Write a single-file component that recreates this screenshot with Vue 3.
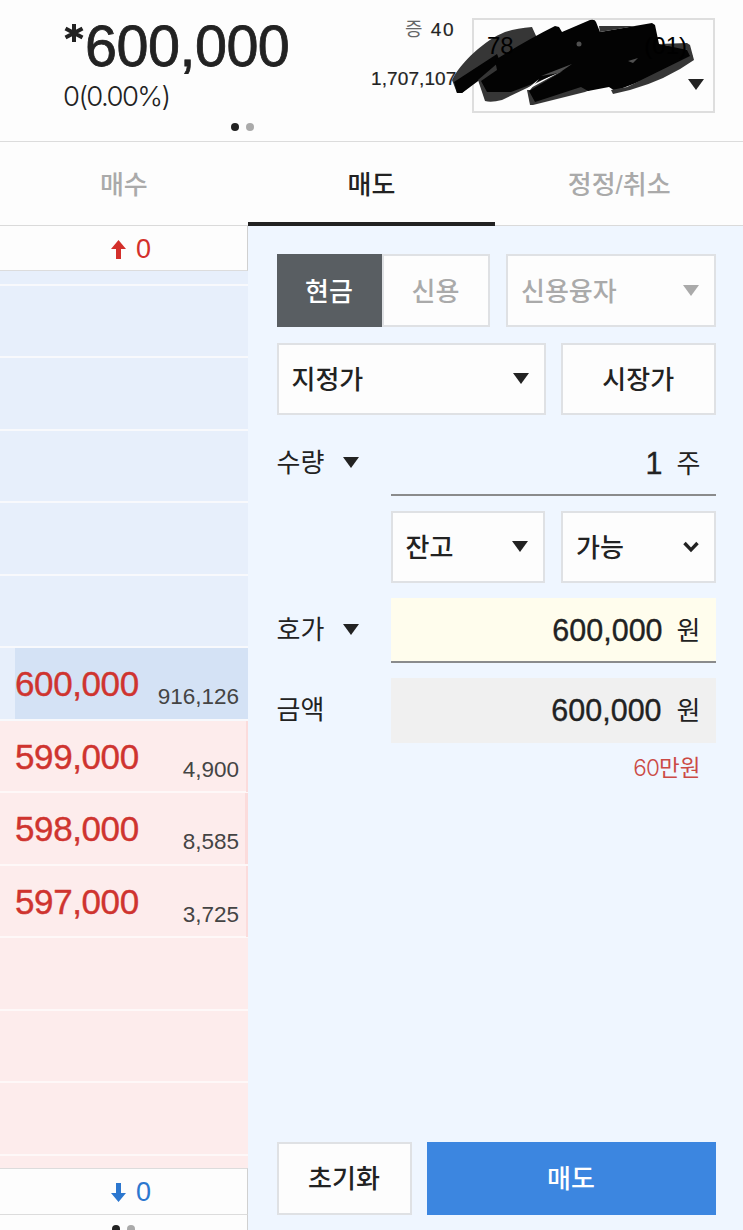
<script setup>
import { ref } from 'vue';

const tabs = ['매수', '매도', '정정/취소'];
const activeTab = ref('매도');

// price ladder, the first row is cut off by the scroll position
const rows = [
    { side: 'ask', cut: true },
    { side: 'ask' },
    { side: 'ask' },
    { side: 'ask' },
    { side: 'ask' },
    { side: 'ask' },
    { side: 'ask', price: '600,000', volume: '916,126', current: true },
    { side: 'bid', price: '599,000', volume: '4,900', bar: 2 },
    { side: 'bid', price: '598,000', volume: '8,585', bar: 3 },
    { side: 'bid', price: '597,000', volume: '3,725', bar: 2 },
    { side: 'bid' },
    { side: 'bid' },
    { side: 'bid' },
    { side: 'bid' }
];
</script>

<template>
    <div class="screen">
        <header class="header">
            <div class="quote">
                <div class="quote-price">
                    <svg class="star" viewBox="0 0 20 20"><path d="M10 1V19M1.5 5.5L18.5 14.5M18.5 5.5L1.5 14.5" /></svg>
                    <span>600,000</span>
                </div>
                <div class="quote-change">0(0.00%)</div>
                <div class="dots"><i class="on"></i><i></i></div>
            </div>
            <div class="stats">
                <div class="margin"><span>증</span> 40</div>
                <div class="total">1,707,107</div>
            </div>
            <div class="account">
                <svg class="marker" viewBox="0 0 250 100">
                    <path class="soft" d="M1 70C10 52 34 30 54 22Q66 18 81 17L86 28L44 54L11 83H6Z" />
                    <path d="M3 72L46 44L50 54L11 83H6Z" />
                    <path class="soft" d="M27 70L48 52L120 40L130 50L76 78L51 90Q40 93 34 91Z" />
                    <path class="soft" d="M76 80L120 56L180 50L190 60L134 82L82 95H79Z" />
                    <path d="M44 50Q76 30 104 16L108 17L111 22L139 10Q144 9 145 12L149 22L201 13L204 15L208 34L232 38L239 41L242 47Q210 64 164 81L158 77L137 81L130 77L84 92L78 81L112 61L76 76L60 82L36 82L30 71L46 60Z" />
                    <path class="soft" d="M148 16L185 16L149 22Z" />
                    <path class="soft" d="M208 34L236 33L239 35L243 50Q215 70 179 80L162 84L160 80L176 77L239 46L236 40Z" />
                    <path class="gap" d="M75 80L88 69L79 80Z" />
                    <path class="glint" d="M90 66L121 54L108 63Z" />
                    <circle class="glint" cx="128" cy="34" r="2.5" />
                    <path class="glint" d="M177 51L187 48L182 53Z" />
                </svg>
                <div class="account-no"><span>78</span><span>(01)</span></div>
                <svg class="caret" viewBox="0 0 16 11"><path d="M0 0H16L8 11Z" /></svg>
            </div>
        </header>

        <nav class="tabs">
            <div v-for="tab in tabs" :key="tab" :class="['tab', { active: tab === activeTab }]">{{ tab }}</div>
        </nav>

        <main class="body">
            <section class="ladder">
                <div class="limit up">
                    <svg viewBox="0 0 15 19"><path d="M7.5 0L15 9H10V19H5V9H0Z" /></svg>
                    <span>0</span>
                </div>
                <div class="rows">
                    <div v-for="(row, i) in rows" :key="i"
                         :class="['row', row.side, { cut: row.cut, current: row.current }]">
                        <span class="price">{{ row.price }}</span>
                        <span class="volume">{{ row.volume }}</span>
                        <i v-if="row.bar" class="bar" :style="{ width: row.bar + 'px' }"></i>
                    </div>
                </div>
                <div class="limit down">
                    <svg viewBox="0 0 15 19"><path d="M7.5 19L15 10H10V0H5V10H0Z" /></svg>
                    <span>0</span>
                </div>
                <div class="pager"><i class="on"></i><i></i></div>
            </section>

            <section class="order">
                <div class="line">
                    <div class="toggle">
                        <div class="toggle-item selected">현금</div>
                        <div class="toggle-item">신용</div>
                    </div>
                    <div class="box select muted loan">
                        <span>신용융자</span>
                        <svg class="caret" viewBox="0 0 16 11"><path d="M0 0H16L8 11Z" /></svg>
                    </div>
                </div>
                <div class="line">
                    <div class="box select wide">
                        <span>지정가</span>
                        <svg class="caret" viewBox="0 0 16 11"><path d="M0 0H16L8 11Z" /></svg>
                    </div>
                    <div class="box half center">시장가</div>
                </div>
                <div class="field">
                    <div class="label">수량 <svg class="caret" viewBox="0 0 16 11"><path d="M0 0H16L8 11Z" /></svg></div>
                    <div class="input"><span class="num">1</span><span class="unit">주</span></div>
                </div>
                <div class="line right">
                    <div class="box select half">
                        <span>잔고</span>
                        <svg class="caret" viewBox="0 0 16 11"><path d="M0 0H16L8 11Z" /></svg>
                    </div>
                    <div class="box select half">
                        <span>가능</span>
                        <svg class="chevron" viewBox="0 0 16 12"><path d="M1.5 2L8 8.8L14.5 2" /></svg>
                    </div>
                </div>
                <div class="field">
                    <div class="label">호가 <svg class="caret" viewBox="0 0 16 11"><path d="M0 0H16L8 11Z" /></svg></div>
                    <div class="input yellow"><span class="num">600,000</span><span class="unit">원</span></div>
                </div>
                <div class="field">
                    <div class="label">금액</div>
                    <div class="input grey"><span class="num">600,000</span><span class="unit">원</span></div>
                </div>
                <div class="hint"><span>60</span>만원</div>
                <div class="actions">
                    <div class="box reset">초기화</div>
                    <div class="sell">매도</div>
                </div>
            </section>
        </main>
    </div>
</template>

<style>
body {
    margin: 0;
    overflow: hidden;
}
</style>

<style scoped>
.screen {
    width: 743px;
    height: 1230px;
    display: flex;
    flex-direction: column;
    overflow: hidden;
    background: #fdfdfd;
    color: #222;
    font-family: "Liberation Sans", "Noto Sans CJK KR", sans-serif;
    font-size: 26px;
}

.screen * {
    box-sizing: border-box;
}

svg {
    display: block;
    flex: none;
}

.header {
    display: flex;
    height: 142px;
    flex: none;
    border-bottom: 1.5px solid #dcdcdc;
}

.quote {
    width: 345px;
    padding: 15px 0 0 63px;
}

.quote-price {
    display: flex;
    height: 62px;
    line-height: 62px;
    font-size: 57.5px;
    letter-spacing: -0.5px;
    white-space: nowrap;
    -webkit-text-stroke: 0.8px #222;
}

.star {
    width: 20px;
    height: 20px;
    margin: 8px 1px 0 1px;
    fill: none;
    stroke: #222;
    stroke-width: 4;
}

.quote-change {
    height: 38px;
    line-height: 38px;
    font-family: Inter, sans-serif;
    font-size: 27.5px;
    font-weight: 300;
    letter-spacing: -1.6px;
}

.dots,
.pager {
    display: flex;
    gap: 7px;
}

.dots {
    padding: 8px 0 0 168px;
}

.dots i,
.pager i {
    width: 8px;
    height: 8px;
    border-radius: 50%;
    background: #aaa;
}

.dots .on,
.pager .on {
    background: #222;
}

.stats {
    width: 127px;
    padding-top: 15px;
    font-size: 19px;
    -webkit-text-stroke: 0.2px #222;
}

.margin {
    width: 110px;
    height: 30px;
    line-height: 30px;
    text-align: right;
    letter-spacing: 1.5px;
}

.margin span {
    color: #666;
    -webkit-text-stroke: 0;
}

.total {
    height: 30px;
    margin-top: 19px;
    padding-left: 26px;
    line-height: 30px;
    letter-spacing: 0.1px;
}

.account {
    position: relative;
    width: 243px;
    height: 95px;
    margin-top: 18px;
    border: 2px solid #dedede;
}

.account-no {
    position: relative;
    display: flex;
    justify-content: space-between;
    padding: 12px 26px 0 13px;
    line-height: 28px;
    font-size: 24px;
    color: #000;
}

.account .caret {
    position: absolute;
    right: 9px;
    top: 59px;
}

/* hand-drawn marker over the account number */
.marker {
    position: absolute;
    left: -23px;
    top: -10px;
    width: 250px;
    height: 100px;
    fill: #030303;
    filter: blur(0.5px);
}

.marker .soft {
    fill: #363636;
}

.marker .glint {
    fill: #505050;
}

.marker .gap {
    fill: #fdfdfd;
}

.caret {
    width: 16px;
    height: 11px;
    fill: #222;
}

.tabs {
    display: flex;
    height: 84px;
    flex: none;
    border-bottom: 1px solid #dadada;
    font-weight: 500;
}

.tab {
    width: 248px;
    height: 84px;
    line-height: 86px;
    text-align: center;
    color: #aaa;
}

.tab.active {
    color: #222;
    border-bottom: 4px solid #222;
}

.body {
    display: flex;
    flex: 1;
    min-height: 0;
}

.ladder {
    width: 248px;
    display: flex;
    flex-direction: column;
    background: #fdfdfd;
}

.limit {
    display: flex;
    align-items: center;
    height: 45px;
    flex: none;
    padding-left: 111px;
    gap: 10px;
    border-right: 1px solid #d0d0d0;
    border-bottom: 1px solid #dcdcdc;
    font-size: 27px;
}

.limit svg {
    width: 15px;
    height: 19px;
    fill: currentColor;
}

.up {
    padding-top: 2px;
    color: #d3302b;
}

.down {
    height: 47px;
    padding-top: 1px;
    border-top: 1px solid #dcdcdc;
    color: #2c77cf;
}

.rows {
    height: 897px;
    flex: none;
    overflow: hidden;
}

.row {
    position: relative;
    display: flex;
    justify-content: space-between;
    height: 72.5px;
    padding: 0 9px 0 15px;
    border-bottom: 2px solid #f8f9fc;
}

.row.cut {
    height: 14.5px;
}

.ask {
    background: #e7effb;
}

.bid {
    background: #fdecec;
    border-color: #fef8f8;
}

.current {
    background: linear-gradient(to right, #e7effb 15px, #d4e2f5 15px);
}

.price {
    line-height: 72px;
    font-size: 35px;
    letter-spacing: -0.4px;
    color: #cf342f;
    -webkit-text-stroke: 0.4px #cf342f;
}

.volume {
    line-height: 97px;
    font-size: 22.5px;
    color: #444;
}

.bar {
    position: absolute;
    right: 0;
    top: 0;
    height: 71px;
    background: #fbdcdc;
}

.pager {
    padding: 10px 0 0 112px;
    flex: 1;
    border-right: 1px solid #d0d0d0;
}

.order {
    flex: 1;
    display: flex;
    flex-direction: column;
    padding: 28px 27.5px 15.5px 28.5px;
    background: #eff6ff;
}

.line {
    display: flex;
    justify-content: space-between;
    height: 72.5px;
    margin-bottom: 16px;
}

.line.right {
    padding-left: 114px;
    margin: -0.5px 0 15px;
}

.box {
    height: 72.5px;
    line-height: 70px;
    border: 2px solid #dfe1e4;
    background: #fdfdfd;
    font-weight: 500;
}

.toggle {
    display: flex;
    width: 213px;
    line-height: 72px;
    text-align: center;
    font-weight: 500;
}

.toggle-item {
    width: 108px;
    border: 2px solid #dfe1e4;
    background: #fdfdfd;
    color: #aaa;
}

.toggle-item.selected {
    width: 105px;
    border-color: #595e62;
    background: #595e62;
    color: #fff;
}

.select {
    display: flex;
    align-items: center;
    justify-content: space-between;
    padding: 0 15px 0 13px;
}

.select span {
    padding-top: 3px;
}

.muted {
    color: #aaa;
}

.muted .caret {
    fill: #aaa;
}

.loan {
    width: 209.5px;
}

.wide {
    width: 269px;
}

.half {
    width: 154.5px;
}

.center {
    text-align: center;
}

.chevron {
    width: 16px;
    height: 12px;
    fill: none;
    stroke: #222;
    stroke-width: 3.4;
}

.field {
    display: flex;
    height: 64.5px;
    margin-bottom: 15.5px;
}

.label {
    display: flex;
    align-items: center;
    gap: 19px;
    width: 114px;
    line-height: 66px;
}

.label .caret {
    margin-top: -2px;
}

.input {
    display: flex;
    flex: 1;
    justify-content: flex-end;
    gap: 14px;
    padding-right: 15px;
    line-height: 64px;
    border-bottom: 2px solid #8a8b8c;
}

.unit {
    line-height: 66px;
}

.num {
    font-size: 30.5px;
    -webkit-text-stroke: 0.35px #222;
}

.yellow {
    background: #fffded;
}

.grey {
    gap: 15px;
    background: #f0f0f0;
    border: 0;
}

.hint {
    margin-top: -7px;
    padding-right: 15px;
    line-height: 34px;
    text-align: right;
    font-size: 22.5px;
    color: #cb4a45;
}

.hint span {
    font-family: Inter, sans-serif;
    font-weight: 300;
    letter-spacing: -0.8px;
}

.actions {
    display: flex;
    gap: 15px;
    margin-top: auto;
    text-align: center;
}

.reset {
    width: 135px;
}

.sell {
    flex: 1;
    line-height: 74px;
    height: 72.5px;
    background: #3c86e0;
    color: #fff;
    font-weight: 500;
}
</style>
